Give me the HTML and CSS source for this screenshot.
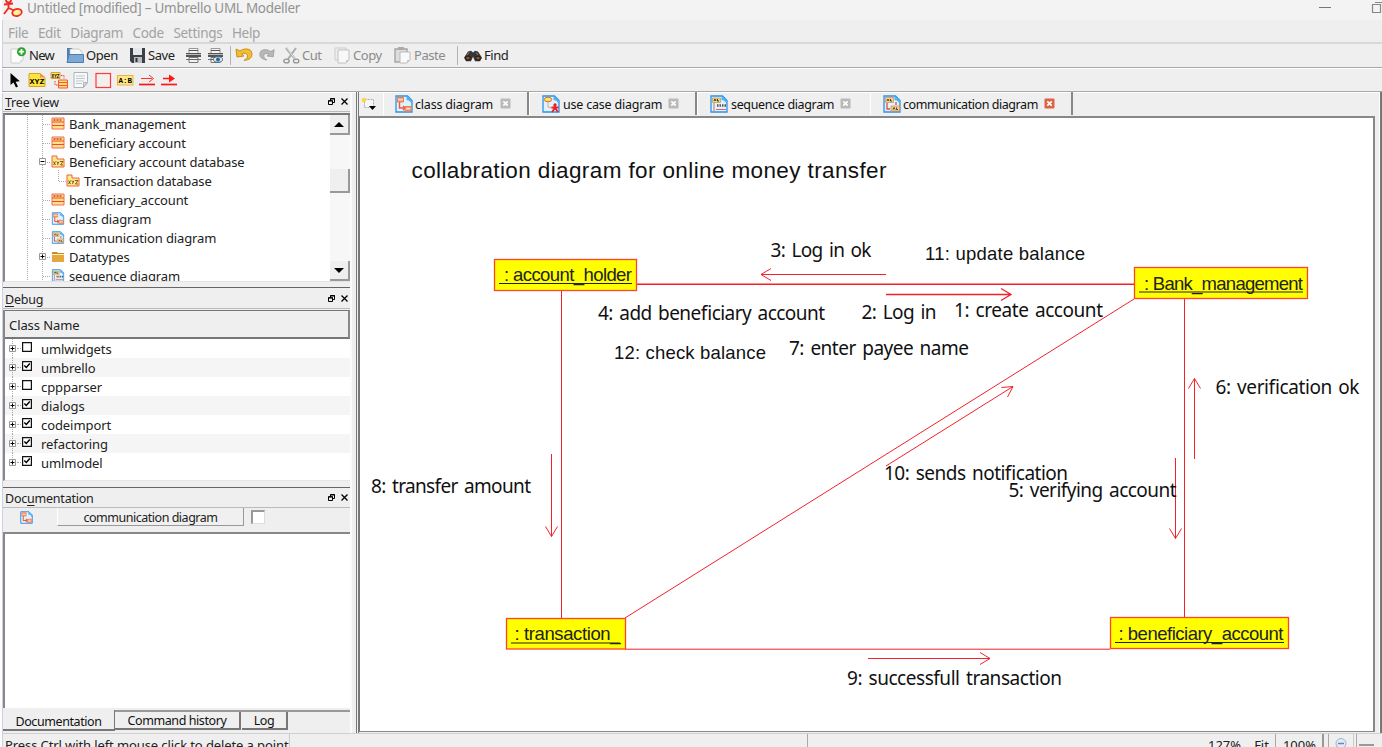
FILE: index.html
```html
<!DOCTYPE html>
<html lang="en">
<head>
<meta charset="utf-8">
<title>Umbrello UML Modeller</title>
<link rel="stylesheet" href="styles.css">
</head>
<body>
<svg class="defs" width="0" height="0">
  <defs>
    <symbol id="page" viewBox="0 0 18 18"><path d="M1 1h11.500l4.500 4.500v11.500h-16z" fill="#dff2ff" stroke="#2a93e6" stroke-width="1.300"/><path d="M11.500 1l5.500 5v5q-1-6-5.500-6z" fill="#53b1f4"/></symbol>
    <symbol id="d-class" viewBox="0 0 18 18"><use href="#page"/><path d="M2.500 2.500h6v4.500h-6zM10 11.500h6v4.500h-6z" fill="#ffa07c" stroke="#ee7a50"/><path d="M3 4.700h5M10.500 13.700h5" stroke="#ffe8d8"/><path d="M4.500 7v6h4M8 11l2 2-2 2" fill="none" stroke="#ef5a38" stroke-width="1.400"/></symbol>
    <symbol id="d-use" viewBox="0 0 18 18"><use href="#page"/><ellipse cx="6" cy="4.500" rx="3.700" ry="2.300" fill="#ffe36b" stroke="#d66a28"/><path d="M6 7v5l4 1" fill="none" stroke="#f09a84"/><path d="M13 11v3M9.500 12.500h7M13 13l-3 4M13 13l3 4" stroke="#f02020" stroke-width="1.800"/><circle cx="13" cy="10" r="1.700" fill="#f02020"/></symbol>
    <symbol id="d-seq" viewBox="0 0 18 18"><use href="#page"/><path d="M2.500 3h8v4.500h-8z" fill="#f3d480" stroke="#b89a50" stroke-width=".7"/><path d="M4 6l1-2 1 2M7.500 4v2h1.500" fill="none" stroke="#333"/><path d="M4 8v8M6 14.500h10" stroke="#ee6050"/><path d="M7 10.500h9" stroke="#555" stroke-width="2.500" stroke-dasharray="1.500 1"/></symbol>
    <symbol id="d-com" viewBox="0 0 18 18"><use href="#page"/><path d="M2.500 2.500h8v5h-8zM8 11h8.500v5h-8.500z" fill="#f6cf84" stroke="#d78a48" stroke-width=".7"/><path d="M4 6l1-2 1 2M7.500 4v2h1.500M10 14.500l1-2 1 2M13.500 12.500v2h1.500" fill="none" stroke="#444"/><path d="M4 8v6h3M13 7v3" fill="none" stroke="#e34b3b" stroke-width="1.300"/></symbol>
    <symbol id="i-class" viewBox="0 0 14 13"><path d="M1 1h12v11h-12z" fill="#ffe08a" stroke="#f66a55"/><path d="M1 5h12M1 8.500h12" stroke="#f04a35"/><path d="M2.500 3h9" stroke="#b04a28" stroke-width="1.600" stroke-dasharray="2 1"/></symbol>
    <symbol id="i-pack" viewBox="0 0 14 13"><path d="M1 1h5v3h7v8h-12z" fill="#ffe98a" stroke="#f0603f"/><path d="M2.500 6.500l2 3.500M4.500 6.500l-2 3.500M5.700 6.500l1.300 2 1-2M7 8.500l-.5 1.500M9 6.500h3l-2.500 3.500h2.500" fill="none" stroke="#604000" stroke-width=".8"/></symbol>
    <symbol id="i-folder" viewBox="0 0 14 13"><path d="M1 2h5l1 1h6v9h-12z" fill="#c98c22"/><path d="M1 5h12v7h-12z" fill="#e3a83f"/><path d="M1 4.500h12" stroke="#fff0bf"/></symbol>
    <symbol id="float" viewBox="0 0 7 7"><path d="M2.500 3v-2.500h4v4h-2M.5 2.700h4v3.800h-4zM2 1h5M0 3h5" fill="none" stroke="#000"/></symbol>
    <symbol id="x" viewBox="0 0 7 7"><path d="M.5.5l6 6M6.500.5l-6 6" stroke="#000" stroke-width="1.300"/></symbol>
    <symbol id="tabx" viewBox="0 0 11 11"><rect x=".5" y=".5" width="10" height="10" rx="1" fill="currentColor"/><path d="M3.300 3.300l4.400 4.400M7.700 3.300l-4.400 4.400" stroke="#fff" stroke-width="1.700"/></symbol>
    <symbol id="plus" viewBox="0 0 7 7"><path d="M.5.5h6v6h-6z" fill="#fff" stroke="#999"/><path d="M1.500 3.500h4M3.500 1.500v4" stroke="#000"/></symbol>
    <symbol id="minus" viewBox="0 0 7 7"><path d="M.5.5h6v6h-6z" fill="#fff" stroke="#999"/><path d="M1.500 3.500h4" stroke="#000"/></symbol>
    <symbol id="off" viewBox="0 0 10 10"><path d="M.6.6h8.800v8.800h-8.800z" fill="#fff" stroke="#111" stroke-width="1.200"/></symbol>
    <symbol id="on" viewBox="0 0 10 10"><use href="#off"/><path d="M2.300 4.500l2 2 3.500-4" fill="none" stroke="#000" stroke-width="1.500"/></symbol>
    <symbol id="printer" viewBox="0 0 17 17"><path d="M4 1.500h9v5h-9z" fill="#f4f4f4" stroke="#999"/><path d="M4 3.500h9" stroke="#555"/><path d="M1 6h15v4h-15z" fill="#555"/><path d="M1 7.500h15" stroke="#bbb"/><path d="M1 12.500h15" stroke="#777"/><path d="M4 10.500h9v5h-9z" fill="#f2f2f2" stroke="#777"/><path d="M4 12.500h9" stroke="#666"/></symbol>
  </defs>
</svg>
<div class="window">
  <header class="titlebar">
    <svg class="logo" width="20" height="20" viewBox="0 0 20 20"><g fill="none" stroke="#f12a22" stroke-width="1.800"><path d="M1 4.500l9-1M5.500 2v6M5.500 8l-4.500 6M5.500 8l7 3"/><circle cx="5.500" cy="0" r="2.500"/><ellipse cx="14" cy="12.500" rx="4.800" ry="3.500" fill="#fff09a" transform="rotate(-15 14 12.500)"/></g></svg>
    <span class="caption">Untitled [modified] – Umbrello UML Modeller</span>
    <svg class="winctl" width="64" height="20" viewBox="0 0 64 20"><path d="M1 7.500h12" stroke="#777"/><path d="M54.500 4.500h8v8h-8zM57 2.500h7" fill="none" stroke="#888" stroke-width="1.200"/></svg>
  </header>
  <nav class="menubar"><span>File</span><span>Edit</span><span>Diagram</span><span>Code</span><span>Settings</span><span>Help</span></nav>
  <div class="toolbar main-tools">
    <div class="tool new"><svg width="18" height="17" viewBox="0 0 18 17"><path d="M1 2h12v11l-3 3h-9z" fill="#fcfcfc" stroke="#ccc"/><path d="M10 16v-3h3z" fill="#ddd"/><circle cx="11.500" cy="4.700" r="4.500" fill="#29a329"/><path d="M11.500 2v5.400M8.800 4.700h5.400" stroke="#fff" stroke-width="1.800"/></svg><span>New</span></div>
    <div class="tool open"><svg width="18" height="17" viewBox="0 0 18 17"><path d="M1 1h5l1 2h8v12h-14z" fill="#4e7fb5"/><path d="M4 2h9l3 3v5h-12z" fill="#f7f7f7" stroke="#bbb" stroke-width=".7"/><path d="M1 15.500l2-8h14.500v8z" fill="#7da7d4" stroke="#4d7dae"/></svg><span>Open</span></div>
    <div class="tool save"><svg width="17" height="17" viewBox="0 0 17 17"><path d="M1 1h15v15h-13l-2-2z" fill="#3c4046"/><path d="M4 1h9v7h-9z" fill="#e4e6e9"/><path d="M5 10h8v6h-8z" fill="#b9bdc2"/><path d="M6.500 11h2v4h-2z" fill="#333"/></svg><span>Save</span></div>
    <div class="tool print"><svg width="17" height="17"><use href="#printer"/></svg></div>
    <div class="tool preview"><svg width="18" height="17" viewBox="0 0 18 17"><use href="#printer" width="17" height="17"/><ellipse cx="11" cy="12.500" rx="4.500" ry="2.800" fill="#d8e9f5" stroke="#567"/><circle cx="11" cy="12.500" r="2" fill="#246a9f"/></svg></div>
    <i class="sep"></i>
    <div class="tool undo"><svg width="19" height="17" viewBox="0 0 19 17"><path d="M1 2l1 8 7-1-2.500-2q5-2 6 1.500 1 3-3.500 5 8-1 8-6 0-6-7-5.500-3 .3-5 2z" fill="#f3bd35" stroke="#c99014"/></svg></div>
    <div class="tool redo"><svg width="17" height="17" viewBox="0 0 19 17"><path d="M18 2l-1 8-7-1 2.500-2q-5-2-6 1.500-1 3 3.500 5-8-1-8-6 0-6 7-5.500 3 .3 5 2z" fill="#b8b8b8" stroke="#a0a0a0"/></svg></div>
    <div class="tool dim cut"><svg width="17" height="17" viewBox="0 0 17 17"><path d="M3 1l9 11M13 1l-8 11" fill="none" stroke="#aaa" stroke-width="2"/><path d="M4 1l8 11" stroke="#eee" stroke-width=".8"/><ellipse cx="3.500" cy="14" rx="2.700" ry="1.900" fill="none" stroke="#929292" stroke-width="1.300"/><ellipse cx="13.200" cy="14" rx="2.700" ry="1.900" fill="none" stroke="#929292" stroke-width="1.300"/></svg><span>Cut</span></div>
    <div class="tool dim copy"><svg width="17" height="17" viewBox="0 0 17 17"><path d="M1 1h11v12h-11z" fill="#eee" stroke="#ccc"/><path d="M4 3h11v10l-3 3h-8z" fill="#f8f8f8" stroke="#c1c1c1"/><path d="M12 16v-3h3z" fill="#ccc"/></svg><span>Copy</span></div>
    <div class="tool dim paste"><svg width="18" height="17" viewBox="0 0 18 17"><path d="M1 2h12v13h-12z" fill="#ddd" stroke="#a5a5a5" stroke-width="1.400"/><path d="M4 0h6v3h-6z" fill="#aaa"/><path d="M6 5h10v8l-3 3h-7z" fill="#fafafa" stroke="#bbb"/><path d="M13 16v-3h3z" fill="#ccc"/></svg><span>Paste</span></div>
    <i class="sep"></i>
    <div class="tool find"><svg width="18" height="13" viewBox="0 0 18 15" preserveAspectRatio="none"><path d="M4 3l3-1 2 2 2-2 3 1 4 7-2 4h-5l-2-5-2 5h-5l-2-4z" fill="#393637"/><circle cx="4" cy="10.500" r="2.300" fill="#99532c" stroke="#111"/><circle cx="14" cy="10.500" r="2.300" fill="#99532c" stroke="#111"/><path d="M5 4l-2 3M12 4l2 3" stroke="#888"/></svg><span>Find</span></div>
  </div>
  <div class="toolbar uml-tools">
    <svg class="palette" width="180" height="20" viewBox="0 69 180 20">
      <path d="M10.500 72v12l3-2.500 2.500 5 2-1-2.400-4.800 4.200-.4z" fill="#000"/>
      <path d="M29 72.500h11l5 4v9h-16z" fill="#ffe43a" stroke="#d3a526"/><path d="M40 72.500v4h5z" fill="#ff8a65"/><text class="glyph" x="29.500" y="83" font-size="8" textLength="15" lengthAdjust="spacingAndGlyphs">XYZ</text>
      <path d="M51 71.500h9v6h-9z" fill="#ffe16d" stroke="#d9a034"/><text class="glyph" x="51.500" y="76.500" font-size="5" textLength="8" lengthAdjust="spacingAndGlyphs">XYZ</text><path d="M58.500 79h9v8h-9zM58.500 81.500h9M58.500 84.500h9" fill="#ffdf70" stroke="#ef5a3e"/><path d="M61 74.500h3v3M55 80v4h3" fill="none" stroke="#ef3333" stroke-dasharray="1.500 1"/>
      <path d="M74 71.500h13.500v10l-4 5h-9.500z" fill="#f7f9fa" stroke="#adb5bb"/><path d="M76 75h9M76 77.500h9M76 80h8M76 82.500h6" stroke="#bdc5c9"/><path d="M83.500 86.500v-5h4z" fill="#d3dde3" stroke="#adb5bb"/>
      <rect x="96" y="72.500" width="14.500" height="14" fill="#f2efee" stroke="#ff3939" stroke-width="1.200"/>
      <rect x="117.500" y="74.500" width="15.500" height="9.500" fill="#ffe784" stroke="#e8b346"/><text class="glyph" x="118.500" y="82" font-size="7.500" textLength="13.500" lengthAdjust="spacingAndGlyphs">A:B</text>
      <path d="M139 83.500h16" stroke="#ff1717" stroke-width="1.700"/><path d="M141 77.500h11M149 74l4.500 3.500-4.500 3.500" fill="none" stroke="#ff3333"/>
      <path d="M161 83.500h16" stroke="#ff1717" stroke-width="1.700"/><path d="M163 77.500h8" stroke="#ff1717" stroke-width="1.500"/><path d="M169 73.500l6 4-6 4z" fill="#ff1717"/>
    </svg>
  </div>
  <div class="workspace">
    <aside class="docks">
      <section class="dock tree-dock">
        <div class="docktitle"><span><u>T</u>ree View</span><svg class="dockbtn" width="7" height="7"><use href="#float"/></svg><svg width="7" height="7"><use href="#x"/></svg></div>
        <div class="treebox">
          <div class="tree">
            <svg class="branches" width="70" height="167" viewBox="0 0 70 167"><path d="M22.500 0v167M37.500 0v167M38 9.500h8M38 28.500h8M42 47.500h4M53.500 55v11.500h8M38 85.500h8M38 104.500h8M38 123.500h8M42 142.500h4M38 161.500h8" fill="none" stroke="#aaa" stroke-dasharray="1 1"/><use href="#minus" x="34" y="43" width="7" height="7"/><use href="#plus" x="34" y="138" width="7" height="7"/></svg>
            <div class="node"><svg><use href="#i-class"/></svg><span>Bank_management</span></div>
            <div class="node"><svg><use href="#i-class"/></svg><span>beneficiary account</span></div>
            <div class="node"><svg><use href="#i-pack"/></svg><span>Beneficiary account database</span></div>
            <div class="node child"><svg><use href="#i-pack"/></svg><span>Transaction database</span></div>
            <div class="node"><svg><use href="#i-class"/></svg><span>beneficiary_account</span></div>
            <div class="node"><svg><use href="#d-class"/></svg><span>class diagram</span></div>
            <div class="node"><svg><use href="#d-com"/></svg><span>communication diagram</span></div>
            <div class="node"><svg><use href="#i-folder"/></svg><span>Datatypes</span></div>
            <div class="node"><svg><use href="#d-seq"/></svg><span>sequence diagram</span></div>
          </div>
          <div class="scroll"><b class="up"></b><b class="thumb"></b><b class="down"></b></div>
        </div>
      </section>
      <section class="dock debug-dock">
        <div class="docktitle"><span><u>D</u>ebug</span><svg class="dockbtn" width="7" height="7"><use href="#float"/></svg><svg width="7" height="7"><use href="#x"/></svg></div>
        <div class="classes">
          <div class="colhead">Class Name</div>
          <div class="row"><svg class="ex"><use href="#plus"/></svg><svg class="chk"><use href="#off"/></svg><span>umlwidgets</span></div>
          <div class="row"><svg class="ex"><use href="#plus"/></svg><svg class="chk"><use href="#on"/></svg><span>umbrello</span></div>
          <div class="row"><svg class="ex"><use href="#plus"/></svg><svg class="chk"><use href="#off"/></svg><span>cppparser</span></div>
          <div class="row"><svg class="ex"><use href="#plus"/></svg><svg class="chk"><use href="#on"/></svg><span>dialogs</span></div>
          <div class="row"><svg class="ex"><use href="#plus"/></svg><svg class="chk"><use href="#on"/></svg><span>codeimport</span></div>
          <div class="row"><svg class="ex"><use href="#plus"/></svg><svg class="chk"><use href="#on"/></svg><span>refactoring</span></div>
          <div class="row last"><svg class="ex"><use href="#plus"/></svg><svg class="chk"><use href="#on"/></svg><span>umlmodel</span></div>
        </div>
      </section>
      <section class="dock doc-dock">
        <div class="docktitle"><span>Doc<u>u</u>mentation</span><svg class="dockbtn" width="7" height="7"><use href="#float"/></svg><svg width="7" height="7"><use href="#x"/></svg></div>
        <div class="dochead"><svg width="13" height="13"><use href="#d-class"/></svg><div class="docname">communication diagram</div><div class="box"></div></div>
        <div class="editor"></div>
      </section>
      <div class="docktabs"><div class="dtab active">Documentation</div><div class="dtab hist">Command history</div><div class="dtab log">Log</div></div>
    </aside>
    <main class="center">
      <div class="tabs">
        <div class="newtab"><svg width="18" height="14" viewBox="0 0 18 14"><path d="M3.500 2.500h9v8h-9z" fill="#f7f7f7" stroke="#aaa" stroke-dasharray="2 1"/><circle cx="3" cy="3" r="2.300" fill="#ffd34b"/><path d="M8 9h7l-3.500 4z"/></svg></div>
        <div class="tab t1"><svg class="ticon"><use href="#d-class"/></svg><span>class diagram</span><svg class="close"><use href="#tabx"/></svg></div>
        <div class="tab t2"><svg class="ticon"><use href="#d-use"/></svg><span>use case diagram</span><svg class="close"><use href="#tabx"/></svg></div>
        <div class="tab t3"><svg class="ticon"><use href="#d-seq"/></svg><span>sequence diagram</span><svg class="close"><use href="#tabx"/></svg></div>
        <div class="tab t4"><svg class="ticon"><use href="#d-com"/></svg><span>communication diagram</span><svg class="close red"><use href="#tabx"/></svg></div>
      </div>
      <svg class="canvas" viewBox="360 118 1013 613">
        <g class="links">
          <path d="M636 284.300H1134" stroke-width="1.500"/>
          <path d="M561.500 290V618M1184.500 298V618M625 649.200H1110M625 618L1134 299"/>
        </g>
        <g class="arrows">
          <path d="M886 274.500H761M771 268.500l-10 6 10 6"/>
          <path d="M886 294.500H1011M1001 288.500l10 6-10 6" stroke-width="1.300"/>
          <path d="M551.500 454V536.500M545.500 526.500l6 10 6-10"/>
          <path d="M886 466L1013 386.500M1001.500 387.500l11.500-1-5.500 10.500"/>
          <path d="M1194.500 459V378.500M1188.500 388.500l6-10 6 10"/>
          <path d="M1175.500 458V538.500M1169.500 528.500l6 10 6-10"/>
          <path d="M868 658.500H990M980 652.500l10 6-10 6"/>
        </g>
        <g class="nodes"><rect x="494.500" y="259.500" width="142" height="31"/><rect x="1134.500" y="267.500" width="173" height="31"/><rect x="506.500" y="618.500" width="119" height="30.500"/><rect x="1110.500" y="617.500" width="178" height="31"/></g>
        <g class="nodetext">
          <text x="504" y="281" textLength="128">: account_holder</text><text x="1144" y="289.500" textLength="159">: Bank_management</text><text x="514.500" y="640" textLength="106">: transaction_</text><text x="1118.500" y="640" textLength="165">: beneficiary_account</text>
          <path d="M499 283.500H632M1139 292H1303M511 643H620M1115 642.500H1284"/>
        </g>
        <g class="arial"><text x="411.500" y="178" font-size="22.500" textLength="475">collabration diagram for online money transfer</text><text x="925" y="260" textLength="160">11: update balance</text><text x="614" y="358.500" textLength="152">12: check balance</text></g>
        <g class="tahoma">
          <text x="770.500" y="256.500" textLength="101">3: Log in ok</text><text x="598" y="319.500" textLength="227">4: add beneficiary account</text><text x="861.500" y="319" textLength="75">2: Log in</text><text x="954" y="316.500" textLength="149">1: create account</text><text x="789" y="354.500" textLength="180">7: enter payee name</text><text x="1215.500" y="393.500" textLength="144">6: verification ok</text><text x="371" y="492.500" textLength="160">8: transfer amount</text><text x="884" y="479.500" textLength="184">10: sends notification</text><text x="1008.500" y="496.500" textLength="168">5: verifying account</text><text x="847" y="684.500" textLength="215">9: successfull transaction</text>
        </g>
      </svg>
    </main>
    <div class="edge"></div>
  </div>
  <footer class="status"><div class="message">Press Ctrl with left mouse click to delete a point</div><div class="zoominfo"><span class="pct">127%</span><span class="fit">Fit</span><span class="hundred">100%</span></div><div class="zoomout"><svg width="14" height="14" viewBox="0 0 14 14"><circle cx="8" cy="5.500" r="5" fill="#e1ebf6" stroke="#9fb2c5"/><path d="M5 5.500h6" stroke="#6689b0" stroke-width="1.500"/><path d="M4 9l-3 3" stroke="#aaa" stroke-width="2"/></svg></div><div class="slider"><i></i></div></footer>
</div>
</body>
</html>
```
FILE: styles.css
```css
* { box-sizing: border-box; }
body { margin: 0; background: #fff; overflow: hidden; font-family: "Noto Sans", "Open Sans", sans-serif; color: #222; }
svg { display: block; flex: none; }
.defs { position: absolute; }
.window { width: 1382px; height: 747px; display: flex; flex-direction: column; overflow: hidden; background: #efefef; border-left: 2px solid #fbfdff; box-shadow: inset 1px 0 #cbd4da; white-space: nowrap; }
.titlebar { height: 20px; flex: none; display: flex; background: #f3f3f3; font-size: 13.500px; line-height: 17px; color: #929292; }
.logo { margin-left: 1px; }
.caption { margin-left: 4px; letter-spacing: -.28px; }
.winctl { margin-left: auto; }
.menubar { height: 24px; flex: none; display: flex; padding-left: 6px; gap: 9.500px; border-bottom: 2px solid #d8d8d8; font-size: 13.500px; line-height: 26px; letter-spacing: -.3px; color: #a2a2a2; }
.toolbar { display: flex; align-items: center; height: 24px; flex: none; border-bottom: 1px solid #a8a8a8; box-shadow: 0 1px #fff; }
.main-tools { font-size: 13px; letter-spacing: -.45px; color: #222; padding-left: 8px; }
.tool { display: flex; align-items: center; gap: 2px; flex: none; }
.tool span { margin-top: -1px; }
.dim { color: #8b8b8b; }
.new { width: 56px; letter-spacing: -.7px; gap: 1px; }
.open { width: 63px; }
.save { width: 56px; }
.print { width: 22px; }
.preview { width: 23px; }
.sep { width: 1px; height: 19px; background: #b4b4b4; flex: none; }
.undo { width: 27px; padding-left: 4px; }
.redo { width: 25px; }
.cut { width: 51px; }
.copy { width: 60px; }
.paste { width: 63px; }
.find { margin-left: 6px; gap: 2px; }
.palette { margin-left: -2px; }
.glyph { font-family: "Liberation Mono", monospace; font-weight: bold; }
.workspace { display: flex; height: 641px; flex: none; }
.docks { width: 349px; margin-left: 1px; border-right: 2px solid #fafafa; display: flex; flex-direction: column; flex: none; }
.dock { flex: none; }
.docktitle { height: 20px; display: flex; align-items: center; padding: 0 2px; gap: 6px; font-size: 12.500px; letter-spacing: -.22px; border-bottom: 1px solid #bbb; }
.docktitle span { padding-top: 2px; }
.docktitle u { text-underline-offset: 2px; }
.dockbtn { margin-left: auto; }
.tree-dock { height: 196px; border-bottom: 1px solid #666; }
.treebox { display: flex; height: 169px; margin-top: 1px; background: #fff; border-top: 2px solid #777; border-left: 2px solid #888; border-bottom: 1px solid #e3e3e3; }
.tree { width: 325px; overflow: hidden; position: relative; font-size: 13px; letter-spacing: -.13px; }
.branches { position: absolute; left: 0; top: 0; }
.node { height: 19px; line-height: 19px; display: flex; align-items: center; gap: 4px; padding-left: 46px; }
.node svg { width: 14px; height: 13px; position: relative; top: -1px; }
.child { padding-left: 61px; }
.scroll { width: 20px; display: flex; flex-direction: column; background: #f7f7f7; }
.scroll b { height: 20px; background: #efefef; border-right: 2px solid #999; border-bottom: 2px solid #999; display: flex; justify-content: center; align-items: center; }
.up::after { content: ""; border: 5px solid transparent; border-top: 0; border-bottom-color: #000; }
.down::after { content: ""; border: 5px solid transparent; border-bottom: 0; border-top-color: #000; }
.scroll .thumb { margin-top: 34px; height: 24px; }
.scroll .down { margin-top: auto; }
.debug-dock { height: 200px; padding-top: 1px; border-bottom: 1px solid #666; }
.classes { height: 171px; margin-top: 1px; border-left: 2px solid #888; background: #fff; font-size: 13px; letter-spacing: -.08px; border-bottom: 1px solid #e6e6e6; }
.colhead { height: 29px; line-height: 29px; padding-left: 4px; background: #efefef; border: 1px solid #777; border-left: 0; border-right: 2px solid #888; border-bottom: 2px solid #777; }
.row { height: 19px; display: flex; position: relative; line-height: 21px; padding-left: 4px; }
.row:nth-child(odd) { background: #f5f5f5; }
.ex { width: 7px; height: 7px; margin-top: 6px; position: relative; }
.row::before { content: ""; position: absolute; left: 7px; top: 0; bottom: 0; border-left: 1px dotted #aaa; }
.row::after { content: ""; position: absolute; left: 12px; top: 9px; width: 4px; border-top: 1px dotted #aaa; }
.last::before { bottom: 10px; }
.chk { width: 10px; height: 10px; margin-left: 6px; margin-top: 3px; }
.row span { margin-left: 9px; }
.doc-dock { height: 222px; }
.dochead { display: flex; height: 24px; padding-left: 17px; }
.dochead svg { margin-top: 3px; }
.docname { margin-left: 24px; width: 187px; height: 18px; line-height: 19px; text-align: center; background: #f0f0f0; border-right: 1px solid #999; border-bottom: 1px solid #999; border-left: 1px solid #fff; font-size: 12.500px; letter-spacing: -.48px; }
.box { width: 14px; height: 14px; margin: 2px 0 0 7px; background: #fff; border: 1px solid #ddd; border-top: 2px solid #999; border-left: 2px solid #999; }
.editor { height: 176px; border-left: 2px solid #888; border-top: 2px solid #888; background: #fff; }
.docktabs { height: 22px; display: flex; align-items: flex-start; font-size: 12.500px; letter-spacing: -.42px; color: #111; border-top: 2px solid #999; }
.dtab { height: 18px; line-height: 18px; text-align: center; background: #efefef; border-right: 2px solid #777; border-bottom: 2px solid #777; }
.active { width: 112px; height: 21px; margin-top: -2px; line-height: 23px; border-right: 1px solid #777; }
.hist { width: 126px; }
.log { width: 46px; margin-left: 1px; }
.center { width: 1021px; margin-left: 4px; border-left: 3px double #777; display: flex; flex-direction: column; flex: none; }
.tabs { height: 24px; display: flex; flex: none; font-size: 12.500px; letter-spacing: -.2px; color: #111; }
.newtab { width: 24px; padding: 5px 0 0 2px; }
.tab { display: flex; align-items: center; height: 23px; border-right: 2px solid #888; border-left: 1px solid #fff; padding-left: 11px; }
.tab span { margin-left: 2px; padding-top: 2px; }
.ticon { width: 18px; height: 18px; }
.close { width: 11px; height: 11px; color: #b9b9b9; margin-left: auto; margin-right: 16px; }
.red { color: #df6345; }
.t1 { width: 146px; }
.t2 { width: 168px; padding-left: 12px; }
.t2 span, .t3 span { margin-left: 3px; }
.t3 { width: 173px; padding-left: 12px; border-right: 0; letter-spacing: -.35px; }
.t3 .close { margin-right: 19px; }
.t4 { width: 203px; padding-left: 12px; letter-spacing: -.44px; }
.canvas { width: 1016px; height: 616px; background: #fff; border-left: 1px solid #777; border-top: 2px solid #888; border-right: 2px solid #888; border-bottom: 1px solid #888; }
.edge { width: 3px; margin-left: 2px; border-right: 2px solid #777; border-left: 1px solid #fff; }
.links path, .arrows path { fill: none; stroke: #f32229; }
.nodes rect { fill: #ff0; stroke: #ff432c; stroke-width: 1.300px; }
.nodetext { font-family: "Liberation Sans", Arial, sans-serif; font-size: 18.500px; fill: #222; }
.nodetext path { stroke: #222; stroke-width: 1.200px; }
.arial { font-family: "Liberation Sans", Arial, sans-serif; font-size: 18.500px; fill: #111; }
.tahoma { font-family: "Noto Sans", sans-serif; font-size: 19px; word-spacing: 2px; fill: #111; }
.status { height: 15px; flex: none; display: flex; overflow: hidden; font-size: 13px; line-height: 23px; border-top: 1px solid #d0d0d0; }
.message { width: 288px; padding-left: 3px; overflow: hidden; border-right: 1px solid #ccc; letter-spacing: -.1px; }
.zoominfo { margin-left: 517px; width: 517px; padding-left: 400px; display: flex; border-left: 1px solid #aaa; border-right: 2px solid #999; }
.fit { margin-left: 13px; padding-right: 6px; border-right: 1px solid #aaa; }
.hundred { margin-left: 7px; }
.zoomout { width: 26px; margin-left: 4px; padding: 4px 0 0 4px; border-left: 1px solid #aaa; border-right: 1px solid #ccc; }
.slider { width: 26px; margin-left: 2px; border-left: 1px solid #aaa; }
.slider i { display: block; height: 2px; width: 15px; margin: 10px 0 0 2px; background: #999; }
```
